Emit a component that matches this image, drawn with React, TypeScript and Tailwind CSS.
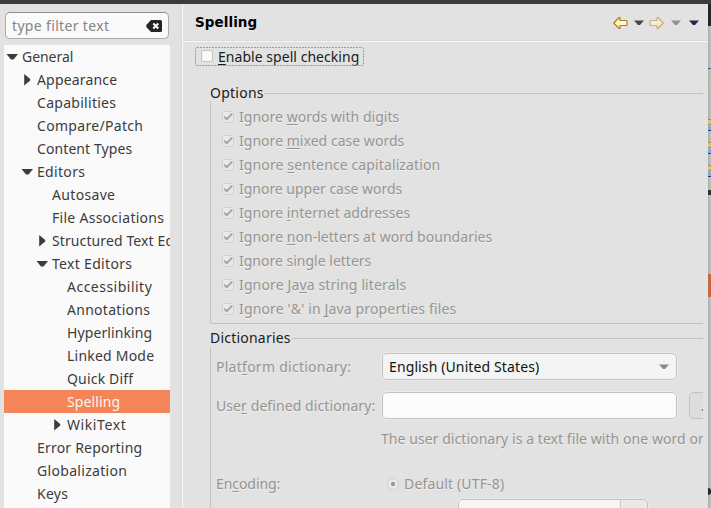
import { useLayoutEffect, useRef, useState } from "react";
import type { ReactNode } from "react";

/* Text set to a fixed width by spreading the difference over its letters. */
function Label({ w, children, className = "" }: { w: number; children: ReactNode; className?: string }) {
  const ref = useRef<HTMLSpanElement>(null);
  const [spacing, setSpacing] = useState(0);
  useLayoutEffect(() => {
    const el = ref.current;
    if (!el) return;
    el.style.letterSpacing = "0px";
    const n = (el.textContent || "").length;
    setSpacing((w - 0.7 - el.getBoundingClientRect().width) / n);
  }, [w]);
  return (
    <span ref={ref} className={`inline-block shrink-0 whitespace-pre ${className}`} style={{ letterSpacing: `${spacing}px` }}>
      {children}
    </span>
  );
}

/* Renders the letter after "_" as the underlined mnemonic. */
function mnemonic(text: string) {
  const i = text.indexOf("_");
  if (i < 0) return text;
  return (
    <>
      {text.slice(0, i)}
      <span className="underline decoration-1 underline-offset-2 [text-decoration-skip-ink:none]">{text[i + 1]}</span>
      {text.slice(i + 2)}
    </>
  );
}

type Node = { text: string; w: number; level: number; state?: "open" | "closed"; selected?: boolean };

const tree: Node[] = [
  { text: "General", w: 52, level: 0, state: "open" },
  { text: "Appearance", w: 81, level: 1, state: "closed" },
  { text: "Capabilities", w: 80, level: 1 },
  { text: "Compare/Patch", w: 107, level: 1 },
  { text: "Content Types", w: 96, level: 1 },
  { text: "Editors", w: 49, level: 1, state: "open" },
  { text: "Autosave", w: 64, level: 2 },
  { text: "File Associations", w: 113, level: 2 },
  { text: "Structured Text Editors", w: 153, level: 2, state: "closed" },
  { text: "Text Editors", w: 81, level: 2, state: "open" },
  { text: "Accessibility", w: 86, level: 3 },
  { text: "Annotations", w: 84, level: 3 },
  { text: "Hyperlinking", w: 86, level: 3 },
  { text: "Linked Mode", w: 88, level: 3 },
  { text: "Quick Diff", w: 67, level: 3 },
  { text: "Spelling", w: 54, level: 3, selected: true },
  { text: "WikiText", w: 60, level: 3, state: "closed" },
  { text: "Error Reporting", w: 106, level: 1 },
  { text: "Globalization", w: 91, level: 1 },
  { text: "Keys", w: 32, level: 1 },
];

const indents = ["pl-[2px]", "pl-[17px]", "pl-[32px]", "pl-[47px]"];

const options = [
  { text: "Ignore _words with digits", w: 161 },
  { text: "Ignore _mixed case words", w: 166 },
  { text: "Ignore _sentence capitalization", w: 202 },
  { text: "Ignore upper case words", w: 164 },
  { text: "Ignore _internet addresses", w: 172 },
  { text: "Ignore _non-letters at word boundaries", w: 254 },
  { text: "Ignore single letters", w: 133 },
  { text: "Ignore Ja_va string literals", w: 168 },
  { text: "Ignore '&' in _Java properties files", w: 218 },
];

function Arrow({ state }: { state?: "open" | "closed" }) {
  return (
    <svg width="16" height="12" viewBox="0 0 16 12" className="shrink-0" fill="#3c3c3c">
      {state === "open" && <path d="M.5 3H12L7.5 8.5H5z" />}
      {state === "closed" && <path d="M3.2 0l6 5v1.6l-6 5z" />}
    </svg>
  );
}

function Caret({ color }: { color: string }) {
  return (
    <svg width="10" height="6" viewBox="0 0 10 6" className="shrink-0" fill={color}>
      <path d="M0 .5h10L6 5H4z" />
    </svg>
  );
}

function NavArrow({ flip = false }: { flip?: boolean }) {
  return (
    <svg width="16" height="14" viewBox="0 0 16 14" className={flip ? "shrink-0 rotate-180 opacity-50" : "shrink-0"}>
      <defs>
        <linearGradient id="gold" x1="0" y1="0" x2="1" y2="0">
          <stop offset="0" stopColor="#fff0a8" />
          <stop offset="1" stopColor="#fffdf0" />
        </linearGradient>
      </defs>
      <path d="M1.7 7L7 1.5h1v3h6.3l.7.7v3.6l-.7.7H8v3H7z" fill="url(#gold)" stroke="#b87a1c" strokeWidth="1.2" strokeLinejoin="round" />
    </svg>
  );
}

function Check() {
  return (
    <svg width="12" height="12" viewBox="0 0 12 12" className="mb-px shrink-0">
      <rect x=".5" y=".5" width="11" height="11" rx="2" fill="#e9e9e9" stroke="#d1d1d1" />
      <path d="M2.2 5.7L4.8 8.2 10.2 2.6" fill="none" stroke="#a5a5a5" strokeWidth="1.9" />
    </svg>
  );
}

function Group({ title, w, className, children }: { title: string; w: number; className: string; children: ReactNode }) {
  return (
    <fieldset className={`ml-[27px] min-w-0 ${className}`}>
      <div className="flex h-[18px] items-center text-[#1b1b1b]">
        <Label w={w}>{title}</Label>
        <div className="h-px flex-1 bg-[#c3c3c3]" />
      </div>
      {children}
    </fieldset>
  );
}

const dim = "text-[#979490] [text-shadow:0_1px_0_#efefef]";

function Sidebar() {
  return (
    <aside className="w-[181px] shrink-0 overflow-hidden pl-1 pt-2">
      <div className="mb-[6px] ml-px flex h-[27px] w-[164px] items-center justify-between rounded-[5px] border border-[#aaa] border-t-[#8f8f8f] bg-[#fafafa] pl-[6px] pr-[6px] text-[#858585]">
        <Label w={98}>type filter text</Label>
        <svg width="16" height="12" viewBox="0 0 16 12">
          <path d="M5 0h9.5Q16 0 16 1.5v9q0 1.5-1.5 1.5H5L.3 7V5z" fill="#252525" />
          <path d="M7.3 3.5l5 5M12.3 3.5l-5 5" stroke="#fff" strokeWidth="2" />
        </svg>
      </div>
      <ul className="h-[463px] w-[166px] overflow-hidden bg-[#fafafa] text-[#3c3c3c]">
        {tree.map((n) => (
          <li key={n.text} className={`flex h-[23px] items-center ${indents[n.level]} ${n.selected ? "bg-[#f38559] text-[#fff4ed]" : ""}`}>
            <Arrow state={n.state} />
            <Label w={n.w}>{n.text}</Label>
          </li>
        ))}
      </ul>
    </aside>
  );
}

function Options() {
  return (
    <Group title="Options" w={54.5} className="mt-[18px]">
      <div className="mt-[-1px] h-[223px] rounded-bl-[3px] border-b border-l border-[#c3c3c3] pl-[11px] pt-[4px]">
        {options.map((o) => (
          <div key={o.text} className={`flex h-6 items-center gap-[5px] ${dim}`}>
            <Check />
            <Label w={o.w}>{mnemonic(o.text)}</Label>
          </div>
        ))}
      </div>
    </Group>
  );
}

const field = "h-[27px] w-[295px] shrink-0 rounded-[5px] border border-[#c2c2c2] shadow-[0_0_0_1px_#ebebeb]";

function Dictionaries() {
  return (
    <Group title="Dictionaries" w={81.5} className="mt-[5px]">
      <div className="h-[180px] border-l border-[#c3c3c3] pl-[5px] pt-[6px]">
        <div className={`flex h-[27px] items-center ${dim}`}>
          <div className="w-[166px] shrink-0">
            <Label w={136}>{mnemonic("Plat_form dictionary:")}</Label>
          </div>
          <div className={`${field} flex items-center justify-between bg-[#f4f4f4] pl-[6px] pr-[7px] text-[#141414]`}>
            <Label w={151}>English (United States)</Label>
            <Caret color="#8d8a86" />
          </div>
        </div>
        <div className={`mt-3 flex h-[27px] items-center ${dim}`}>
          <div className="w-[166px] shrink-0">
            <Label w={160}>{mnemonic("Use_r defined dictionary:")}</Label>
          </div>
          <div className={`${field} bg-[#fbfbfb]`} />
          <div className="ml-3 flex h-[27px] w-[60px] shrink-0 items-center rounded-[5px] border border-[#c2c2c2] bg-[#dddddd] pl-[11px] text-[#555]">...</div>
        </div>
        <div className={`ml-[165px] mt-[9px] flex h-[22px] items-center ${dim}`}>
          <Label w={323.5}>The user dictionary is a text file with one word or</Label>
        </div>
        <div className={`mt-[23px] flex h-[22px] items-center ${dim}`}>
          <div className="w-[171px] shrink-0">
            <Label w={65}>{mnemonic("En_coding:")}</Label>
          </div>
          <svg width="12" height="12" viewBox="0 0 12 12" className="mr-[5px] shrink-0">
            <circle cx="6" cy="6" r="5.5" fill="#ebebeb" stroke="#cecece" />
            <circle cx="6" cy="6" r="2.2" fill="#999" />
          </svg>
          <Label w={101}>Default (UTF-8)</Label>
        </div>
        <div className="ml-[242px] mt-1 flex h-[27px] w-[190px] overflow-hidden rounded-[5px] border border-[#c2c2c2] shadow-[0_0_0_1px_#ebebeb]">
          <div className="flex-1 bg-[#f5f5f5]" />
          <div className="w-[27px] border-l border-[#c6c6c6] bg-[#e9e9e8]" />
        </div>
      </div>
    </Group>
  );
}

function Main() {
  return (
    <main className="w-[525px] shrink-0 overflow-hidden">
      <header className="flex h-[38px] items-center border-b border-[#f8f8f8] pl-[12px] shadow-[inset_0_-1px_0_#dadada]">
        <h1 className="flex-1 pb-px font-['DejaVu_Sans',sans-serif] text-[13.5px] font-bold text-black">
          <Label w={63}>Spelling</Label>
        </h1>
        <div className="flex items-center pr-[9px]">
          <NavArrow />
          <div className="w-[6px]" />
          <Caret color="#464646" />
          <div className="w-[5px]" />
          <NavArrow flip />
          <div className="w-[6px]" />
          <Caret color="#93918d" />
          <div className="w-2" />
          <Caret color="#35204d" />
        </div>
      </header>
      <div className="w-[520px] overflow-hidden">
        <div className="relative ml-[12px] mt-[5px] flex h-[19px] w-[169px] items-center gap-[5px] pl-[6px] text-[#1b1b1b]">
          <svg width="169" height="19" className="absolute left-0 top-0">
            <rect x=".5" y=".5" width="168" height="18" rx="1.5" fill="none" stroke="#ee7f55" strokeDasharray="2 1" />
          </svg>
          <span className="mb-px size-3 shrink-0 rounded-[3px] border border-[#c4c4c4] bg-[#fafafa]" />
          <Label w={142}>{mnemonic("_Enable spell checking")}</Label>
        </div>
        <Options />
        <Dictionaries />
      </div>
    </main>
  );
}

/* Sliver of the window behind the dialog. */
function Behind() {
  return (
    <div className="flex w-[3px] shrink-0 flex-col bg-gradient-to-r from-[#acacac] to-[#c4c4c4]">
      <div className="h-[22px] bg-[#262626]" />
      <div className="mt-[42px] h-px bg-[#365f8e]" />
      <div className="ml-[2px] mt-[9px] h-[9px] bg-[#c8c3a5]" />
      <div className="h-[29px]" />
      {[0, 1, 2].map((i) => (
        <div key={i} className="h-[23px] pt-[3px]">
          <div className="h-[6px] border-y border-[#ae8a43] bg-[#d8bf82]" />
          <div className="mt-px h-[4px] bg-[#7eabd8]" />
          <div className="h-px bg-[#213e90]" />
        </div>
      ))}
      <div className="mt-[5px] h-[5px] bg-[#303030]" />
      <div className="mt-[79px] h-[23px] bg-[#c8683f]" />
      <div className="mt-[191px] h-[7px] w-[3px] rounded-r-full bg-[#252525]" />
    </div>
  );
}

export default function App() {
  return (
    <div className="flex h-[508px] w-[711px] flex-col overflow-hidden bg-[#e2e2e2] font-['Noto_Sans','Open_Sans',sans-serif] text-[14px] leading-[18px]">
      <div className="h-1 shrink-0 bg-[#3d3c36]" />
      <div className="flex h-[504px]">
        <Sidebar />
        <div className="w-0.5 shrink-0 border-l border-r border-l-[#dadada] border-r-[#f6f6f6]" />
        <Main />
        <Behind />
      </div>
    </div>
  );
}
